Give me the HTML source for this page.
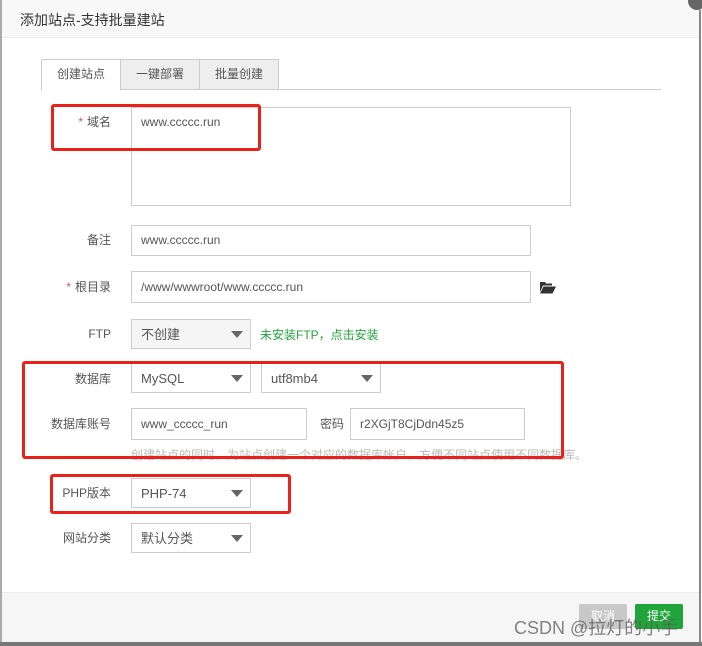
<!DOCTYPE html>
<html><head><meta charset="utf-8"><style>
*{box-sizing:border-box;margin:0;padding:0}
body{width:702px;height:646px;background:#fff;font-family:"Liberation Sans","Noto Sans CJK SC",sans-serif;font-size:12px;color:#555;position:relative;overflow:hidden}
.a{position:absolute}
.hdr{left:0;top:0;width:700px;height:38px;background:#f8f8f8;border-bottom:1px solid #eee}
.ttl{left:20px;top:10px;font-size:14px;color:#333}
.lb{border-left:2px solid #aaa;left:0;top:0;height:646px}
.rb{left:699px;top:10px;height:636px;border-left:2px solid #888}
.tab{top:59px;height:31px;width:80px;border:1px solid #ccc;background:#eee;text-align:center;line-height:29px;font-size:12px;color:#555}
.in{border:1px solid #ccc;background:#fff;padding-left:9px;line-height:29px;color:#555;font-size:12px}
.sel{border:1px solid #ccc;background:#fff;padding-left:9px;line-height:29px;font-size:13px;color:#555}
.sel:after{content:"";position:absolute;right:7px;top:11px;border-left:6px solid transparent;border-right:6px solid transparent;border-top:7px solid #666}
.lab{width:100px;text-align:right;font-size:12px;color:#555;line-height:14px}
.st{color:#e05050;margin-right:4px}
.red{border:3px solid #e8221b;border-radius:3px}
</style></head><body>
<div class="a hdr"></div>
<div class="a ttl">添加站点-支持批量建站</div>
<div class="a lb"></div>
<div class="a rb"></div>
<div class="a" style="left:688px;top:-8px;width:18px;height:18px;border-radius:50%;background:#666"></div>
<div class="a" style="left:41px;top:89px;width:620px;border-top:1px solid #ccc"></div>
<div class="a tab" style="left:41px;background:#fff;border-bottom-color:#fff;height:32px">创建站点</div>
<div class="a tab" style="left:120px">一键部署</div>
<div class="a tab" style="left:199px">批量创建</div>

<div class="a lab" style="left:11px;top:115px"><span class="st">*</span>域名</div>
<div class="a in" style="left:131px;top:107px;width:440px;height:99px;line-height:28px">www.ccccc.run</div>

<div class="a lab" style="left:11px;top:233px">备注</div>
<div class="a in" style="left:131px;top:225px;width:400px;height:31px">www.ccccc.run</div>

<div class="a lab" style="left:11px;top:280px"><span class="st">*</span>根目录</div>
<div class="a in" style="left:131px;top:271px;width:400px;height:32px;line-height:31px">/www/wwwroot/www.ccccc.run</div>
<svg class="a" style="left:540px;top:281px" width="16" height="13" viewBox="0 0 16 13"><path d="M0 1h5l1 1.5h6v2H3L0 11z M3.5 5.5H16L12.5 12.5H0z" fill="#333"/></svg>

<div class="a lab" style="left:11px;top:327px">FTP</div>
<div class="a sel" style="left:131px;top:319px;width:120px;height:30px;background:#f5f5f5">不创建</div>
<div class="a" style="left:260px;top:326px;color:#20a53a;font-size:12px">未安装FTP，点击安装</div>

<div class="a lab" style="left:11px;top:372px">数据库</div>
<div class="a sel" style="left:131px;top:363px;width:120px;height:30px">MySQL</div>
<div class="a sel" style="left:261px;top:363px;width:120px;height:30px">utf8mb4</div>

<div class="a lab" style="left:11px;top:417px">数据库账号</div>
<div class="a in" style="left:131px;top:408px;width:176px;height:32px;line-height:31px">www_ccccc_run</div>
<div class="a" style="left:320px;top:417px;line-height:14px">密码</div>
<div class="a in" style="left:350px;top:408px;width:175px;height:32px;line-height:31px">r2XGjT8CjDdn45z5</div>
<div class="a" style="left:131px;top:446px;color:#bbb;font-size:12px;white-space:nowrap">创建站点的同时，为站点创建一个对应的数据库帐户，方便不同站点使用不同数据库。</div>

<div class="a lab" style="left:11px;top:486px">PHP版本</div>
<div class="a sel" style="left:131px;top:478px;width:120px;height:30px">PHP-74</div>

<div class="a lab" style="left:11px;top:531px">网站分类</div>
<div class="a sel" style="left:131px;top:523px;width:120px;height:30px">默认分类</div>

<div class="a red" style="left:51px;top:104px;width:210px;height:47px"></div>
<div class="a red" style="left:22px;top:361px;width:542px;height:98px"></div>
<div class="a red" style="left:50px;top:474px;width:241px;height:40px"></div>

<div class="a" style="left:2px;top:592px;width:697px;height:50px;background:#f6f6f6;border-top:1px solid #eee"></div>
<div class="a" style="left:579px;top:604px;width:48px;height:25px;background:#c8c8c8;border-radius:2px;color:#fff;text-align:center;line-height:25px">取消</div>
<div class="a" style="left:635px;top:604px;width:48px;height:25px;background:#20a53a;border-radius:2px;color:#fff;text-align:center;line-height:25px">提交</div>
<div class="a" style="left:514px;top:614px;font-size:18px;color:rgba(90,90,90,.75);white-space:nowrap">CSDN @拉灯的小手</div>
<div class="a" style="left:0;top:642px;width:702px;height:4px;background:#777"></div>
</body></html>
